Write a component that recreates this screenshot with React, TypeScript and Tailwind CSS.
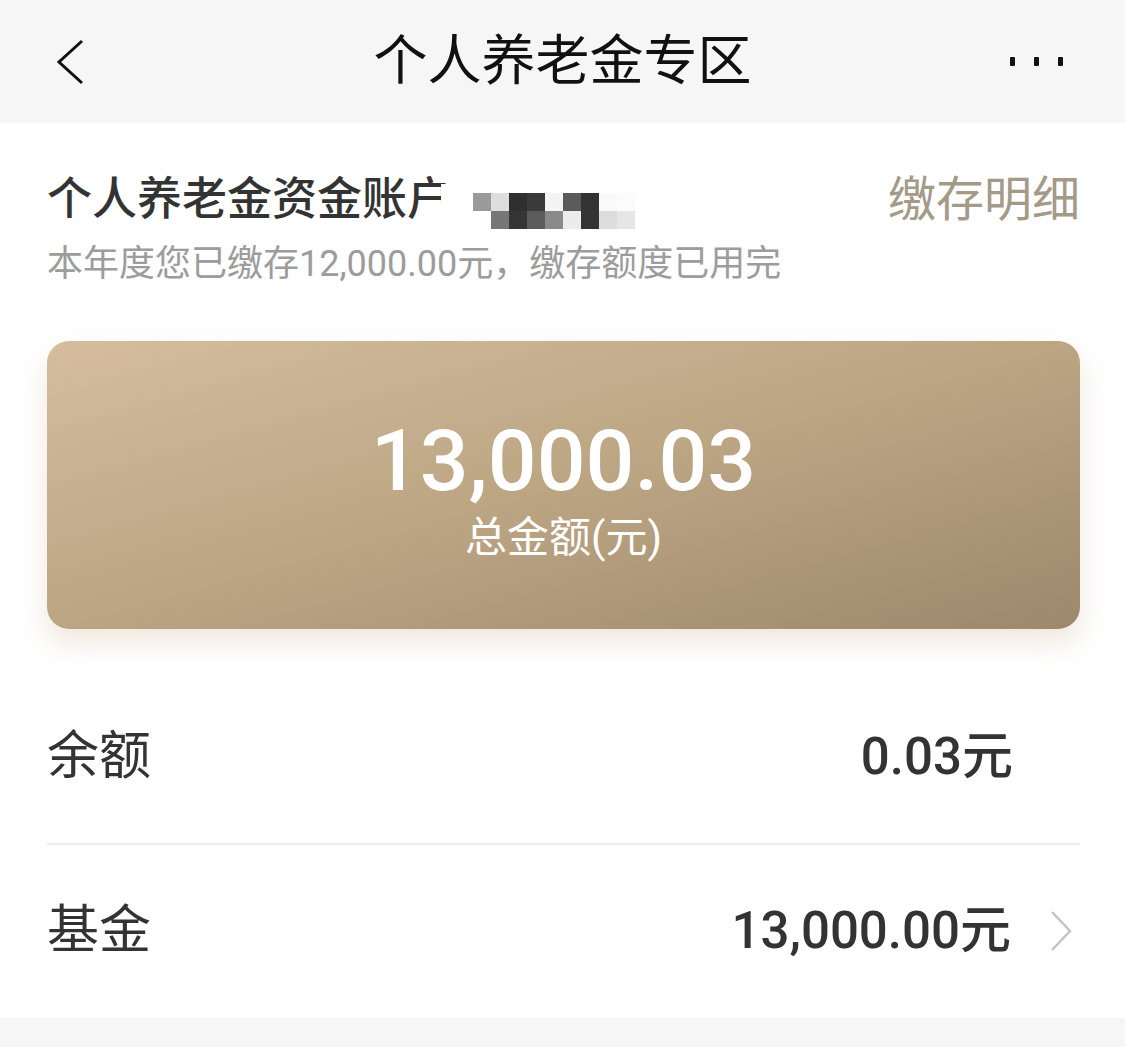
import React from 'react';

const FONT = { fontFamily: 'Roboto, "Noto Sans CJK SC", sans-serif' };

// mosaic over the account number (two rows of pixel blocks)
const mosaicTop = ['#9a9a9a', '#dedede', '#2f2f2f', '#3a3a3a', '#f4f4f4', '#5a5a5a', '#333333', '#fafafa', '#fbfbfb'];
const mosaicBottom = ['#ffffff', '#777777', '#353535', '#5c5c5c', '#8a8a8a', '#ececec', '#333333', '#dcdcdc', '#e6e6e6'];

const BackIcon = () => (
  <svg width="30" height="46" viewBox="0 0 30 46" fill="none">
    <path d="M27 2 L4 23 L27 44" stroke="#111" strokeWidth="3" strokeLinejoin="miter" />
  </svg>
);

const MoreIcon = () => (
  <div className="flex items-center gap-[19px]">
    <span className="block w-[5px] h-[9px] rounded-[1px] bg-[#111]" />
    <span className="block w-[5px] h-[9px] rounded-[1px] bg-[#111]" />
    <span className="block w-[5px] h-[9px] rounded-[1px] bg-[#111]" />
  </div>
);

const Chevron = () => (
  <svg width="24" height="42" viewBox="0 0 24 42" fill="none">
    <path d="M3 2 L21 21 L3 40" stroke="#c4c4c4" strokeWidth="2.5" />
  </svg>
);

const Row = ({ label, value, arrow }: { label: string; value: string; arrow?: boolean }) => (
  <div className="flex items-center h-[172px]">
    <span className="text-[52px] text-[#333]">{label}</span>
    <div className="ml-auto flex items-center">
      <span className="text-[51px] font-medium text-[#333]">{value}</span>
      {arrow ? (
        <span className="ml-[38px] mr-[7px] flex"><Chevron /></span>
      ) : (
        <span className="w-[67px]" />
      )}
    </div>
  </div>
);

export default function App() {
  return (
    <div className="w-[1125px] h-[1047px] bg-[#f6f6f6] overflow-hidden" style={FONT}>
      {/* Nav bar */}
      <div className="h-[123px] flex items-center px-[55px] relative">
        <BackIcon />
        <div className="absolute left-0 right-0 text-center text-[54px] text-[#111] pointer-events-none">
          个人养老金专区
        </div>
        <div className="ml-auto mr-[7px]">
          <MoreIcon />
        </div>
      </div>

      {/* Content */}
      <div className="bg-white h-[895px] pl-[47px] pr-[45px]">
        <div className="pt-[51px] flex items-center">
          <div className="relative flex items-center text-[45px] leading-[52px] font-medium text-[#333]">
            <span>个人养老金资金账户</span>
            {/* blurred account number, laid over the end of the title */}
            <span className="absolute left-[394px] top-[10px] block w-[32px] h-[40px] bg-white" />
            <div className="absolute left-[426px] top-[19px] flex flex-col">
              <div className="flex">
                {mosaicTop.map((c, i) => (
                  <span key={i} className="block w-[18px] h-[18px]" style={{ background: c }} />
                ))}
              </div>
              <div className="flex">
                {mosaicBottom.map((c, i) => (
                  <span key={i} className="block w-[18px] h-[18px]" style={{ background: c }} />
                ))}
              </div>
            </div>
          </div>
          <span className="ml-auto text-[48px] leading-[52px] text-[#a39a88]">缴存明细</span>
        </div>
        <div className="mt-[16px] text-[36px] leading-[44px] text-[#9c9c9c]">
          本年度您已缴存12,000.00元，缴存额度已用完
        </div>

        {/* Total card */}
        <div className="mt-[55px] h-[288px] rounded-[22px] bg-gradient-to-br from-[#d5bd9e] via-[#bba583] to-[#9d886c] shadow-[0_14px_28px_rgba(190,160,120,0.25)] flex flex-col items-center justify-center text-white">
          <div className="text-[86px] leading-[96px] font-medium mt-[6px]">13,000.03</div>
          <div className="text-[42px] leading-[50px] mt-[4px]">总金额(元)</div>
        </div>

        {/* Rows */}
        <div className="mt-[42px]">
          <Row label="余额" value="0.03元" />
          <div className="h-[2px] bg-[#eeeeee]" />
          <Row label="基金" value="13,000.00元" arrow />
        </div>
      </div>
    </div>
  );
}
